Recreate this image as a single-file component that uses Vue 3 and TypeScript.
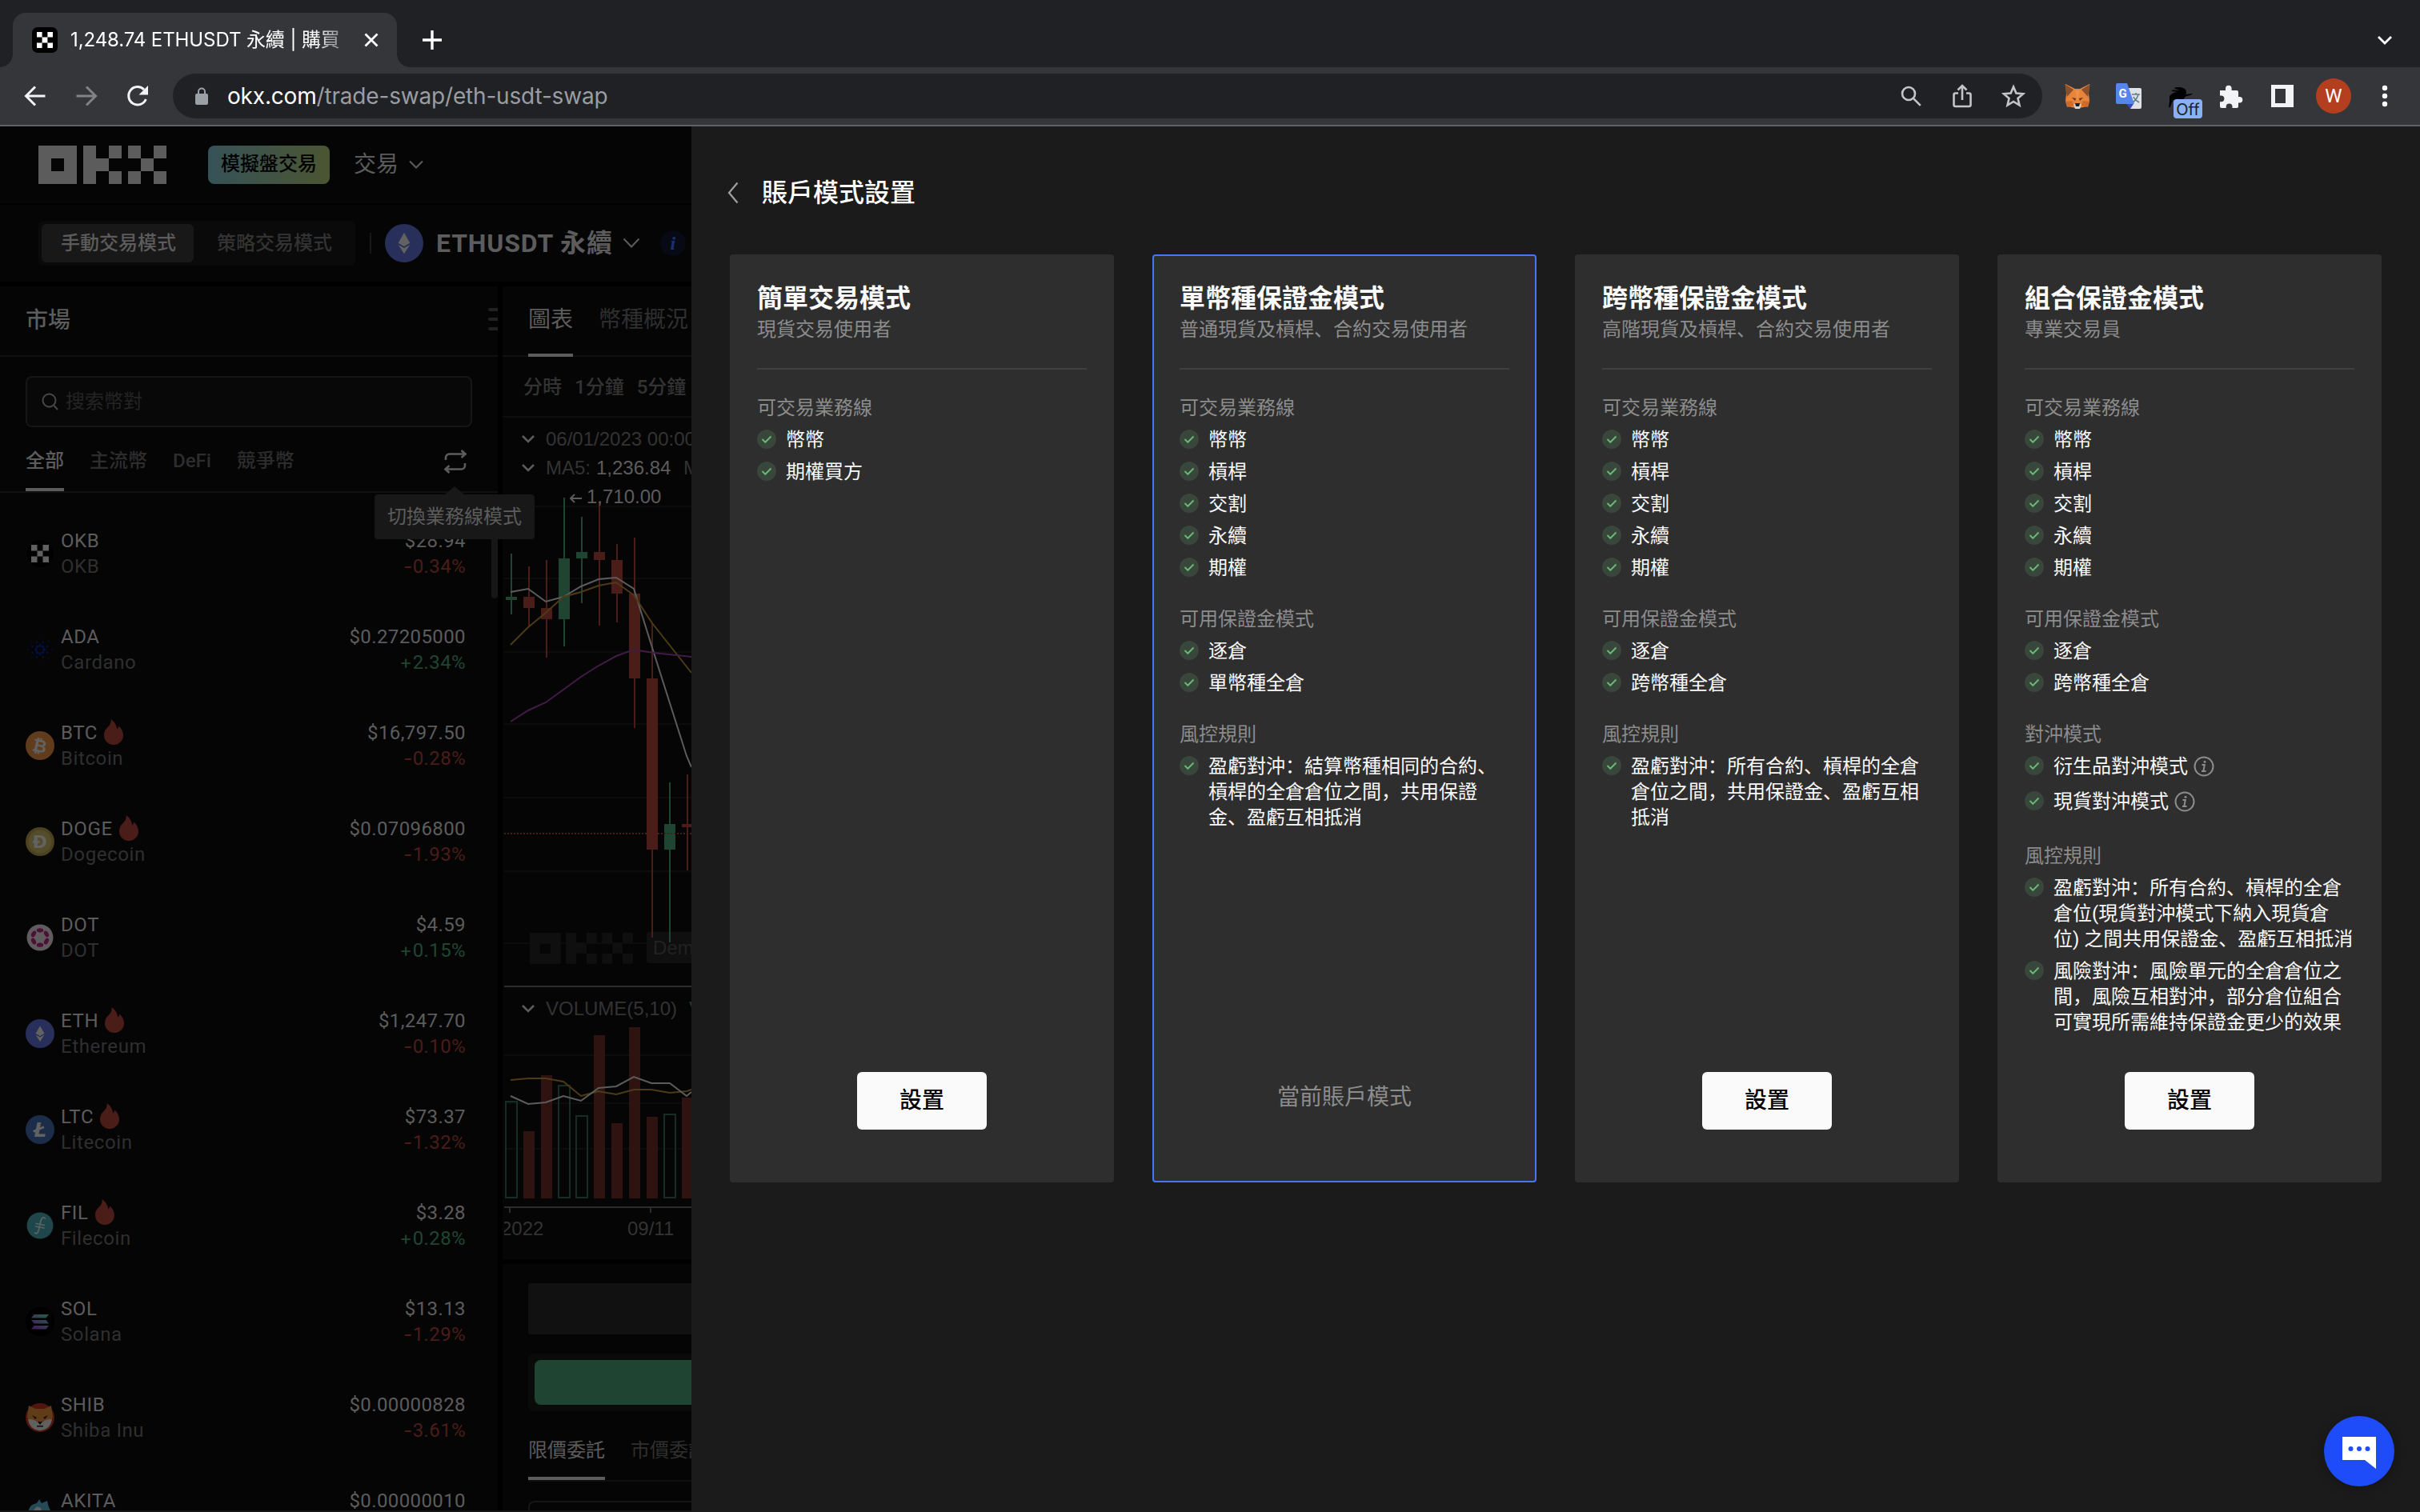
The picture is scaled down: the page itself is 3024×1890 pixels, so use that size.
<script setup lang="ts">
interface Coin {
  symbol: string
  name: string
  price: string
  change: string
  hot?: boolean
}

interface ModeItem {
  lines: string[]
  info?: boolean
}

interface ModeSection {
  label: string
  items: ModeItem[]
}

interface Mode {
  title: string
  subtitle: string
  current?: boolean
  sections: ModeSection[]
}

interface Candle {
  x: number
  up: boolean
  high: number
  low: number
  top: number
  bottom: number
  volumeTop: number
}

const coins: Coin[] = [
  { symbol: 'OKB', name: 'OKB', price: '$28.94', change: '-0.34%' },
  { symbol: 'ADA', name: 'Cardano', price: '$0.27205000', change: '+2.34%' },
  { symbol: 'BTC', name: 'Bitcoin', price: '$16,797.50', change: '-0.28%', hot: true },
  { symbol: 'DOGE', name: 'Dogecoin', price: '$0.07096800', change: '-1.93%', hot: true },
  { symbol: 'DOT', name: 'DOT', price: '$4.59', change: '+0.15%' },
  { symbol: 'ETH', name: 'Ethereum', price: '$1,247.70', change: '-0.10%', hot: true },
  { symbol: 'LTC', name: 'Litecoin', price: '$73.37', change: '-1.32%', hot: true },
  { symbol: 'FIL', name: 'Filecoin', price: '$3.28', change: '+0.28%', hot: true },
  { symbol: 'SOL', name: 'Solana', price: '$13.13', change: '-1.29%' },
  { symbol: 'SHIB', name: 'Shiba Inu', price: '$0.00000828', change: '-3.61%' },
  { symbol: 'AKITA', name: '', price: '$0.00000010', change: '' },
]

const one = (text: string, info = false): ModeItem => ({ lines: [text], info })
const business: ModeSection = {
  label: '可交易業務線',
  items: ['幣幣', '槓桿', '交割', '永續', '期權'].map((t) => one(t)),
}

const modes: Mode[] = [
  {
    title: '簡單交易模式',
    subtitle: '現貨交易使用者',
    sections: [{ label: '可交易業務線', items: [one('幣幣'), one('期權買方')] }],
  },
  {
    title: '單幣種保證金模式',
    subtitle: '普通現貨及槓桿、合約交易使用者',
    current: true,
    sections: [
      business,
      { label: '可用保證金模式', items: [one('逐倉'), one('單幣種全倉')] },
      {
        label: '風控規則',
        items: [{ lines: ['盈虧對沖：結算幣種相同的合約、', '槓桿的全倉倉位之間，共用保證', '金、盈虧互相抵消'] }],
      },
    ],
  },
  {
    title: '跨幣種保證金模式',
    subtitle: '高階現貨及槓桿、合約交易使用者',
    sections: [
      business,
      { label: '可用保證金模式', items: [one('逐倉'), one('跨幣種全倉')] },
      {
        label: '風控規則',
        items: [{ lines: ['盈虧對沖：所有合約、槓桿的全倉', '倉位之間，共用保證金、盈虧互相', '抵消'] }],
      },
    ],
  },
  {
    title: '組合保證金模式',
    subtitle: '專業交易員',
    sections: [
      business,
      { label: '可用保證金模式', items: [one('逐倉'), one('跨幣種全倉')] },
      { label: '對沖模式', items: [one('衍生品對沖模式', true), one('現貨對沖模式', true)] },
      {
        label: '風控規則',
        items: [
          { lines: ['盈虧對沖：所有合約、槓桿的全倉', '倉位(現貨對沖模式下納入現貨倉', '位) 之間共用保證金、盈虧互相抵消'] },
          { lines: ['風險對沖：風險單元的全倉倉位之', '間，風險互相對沖，部分倉位組合', '可實現所需維持保證金更少的效果'] },
        ],
      },
    ],
  },
]

const candles: Candle[] = [
  { x: 639, up: true, high: 692, low: 768, top: 746, bottom: 750, volumeTop: 1376 },
  { x: 661, up: false, high: 708, low: 783, top: 746, bottom: 760, volumeTop: 1414 },
  { x: 683, up: false, high: 700, low: 822, top: 760, bottom: 774, volumeTop: 1344 },
  { x: 705, up: true, high: 622, low: 808, top: 698, bottom: 774, volumeTop: 1356 },
  { x: 727, up: true, high: 646, low: 754, top: 690, bottom: 698, volumeTop: 1394 },
  { x: 749, up: false, high: 627, low: 782, top: 690, bottom: 700, volumeTop: 1294 },
  { x: 771, up: false, high: 680, low: 778, top: 700, bottom: 742, volumeTop: 1404 },
  { x: 793, up: false, high: 672, low: 910, top: 742, bottom: 848, volumeTop: 1284 },
  { x: 815, up: false, high: 778, low: 1172, top: 848, bottom: 1062, volumeTop: 1396 },
  { x: 837, up: true, high: 978, low: 1178, top: 1030, bottom: 1062, volumeTop: 1392 },
  { x: 859, up: false, high: 968, low: 1088, top: 1030, bottom: 1034, volumeTop: 1372 },
]

const gridLines = [633, 723, 815, 905, 997, 1089, 1179, 1319, 1379, 1436]

const adaDots = Array.from({ length: 24 }, (_, i) => {
  const ring = Math.floor(i / 8)
  const angle = (i % 8) * (Math.PI / 4) + ring * 0.39
  const r = 5 + ring * 5
  return { x: 18 + Math.cos(angle) * r, y: 18 + Math.sin(angle) * r, r: 1.9 - ring * 0.55 }
})
</script>

<template>
  <div class="window">
    <header class="browser">
      <div class="tabstrip">
        <div class="tab">
          <svg class="favicon" viewBox="0 0 32 32"><rect width="32" height="32" rx="7" /><path fill="#fff" d="M6 6h6.6v6.6H6zM19.400 6H26v6.600h-6.600zM12.600 12.600h6.800v6.800h-6.800zM6 19.400h6.600V26H6zM19.400 19.400H26V26h-6.600z" /></svg>
          <span class="tab-title">1,248.74 ETHUSDT 永續 | 購買</span>
          <svg class="tab-close" viewBox="0 0 20 20"><path d="M2.500 2.500l15 15M17.500 2.500l-15 15" /></svg>
        </div>
        <svg class="tab-plus" viewBox="0 0 26 26"><path d="M13 1v24M1 13h24" /></svg>
        <svg class="tab-more" viewBox="0 0 20 14"><path d="M2 2l8 8 8-8" /></svg>
      </div>
      <div class="toolbar">
        <svg class="nav-icon" viewBox="0 0 28 28"><path d="M26.500 14H2.500M14 2.500L2.500 14 14 25.500" /></svg>
        <svg class="nav-icon off" viewBox="0 0 28 28"><path d="M1.500 14h24M14 2.500L25.500 14 14 25.500" /></svg>
        <svg class="nav-icon" viewBox="0 0 28 28"><path d="M24.300 18A11.200 11.200 0 1 1 22 6" /><path d="M27 1v11.500H15.500z" fill="#f1f3f4" stroke="none" /></svg>
        <div class="omnibox">
          <svg class="lock" viewBox="0 0 18 22"><rect x="1" y="8" width="16" height="14" rx="2" fill="#9aa0a6" /><path d="M5 9V5.500a4 4 0 0 1 8 0V9" fill="none" stroke="#9aa0a6" stroke-width="2" /></svg>
          <span class="url"><b>okx.com</b>/trade-swap/eth-usdt-swap</span>
          <svg class="box-icon" viewBox="0 0 32 32"><circle cx="13" cy="13" r="8" /><path d="M18.800 18.800l9 9" /></svg>
          <svg class="box-icon" viewBox="0 0 32 32"><path d="M11 12.500H7.500a2 2 0 0 0-2 2V27a2 2 0 0 0 2 2h17a2 2 0 0 0 2-2V14.500a2 2 0 0 0-2-2H21M16 21V3.500M10.500 8.500L16 3l5.500 5.500" /></svg>
          <svg class="box-icon" viewBox="0 0 32 32"><path d="M16 4.500l3.400 8 8.700.8-6.600 5.700 2 8.500L16 23l-7.500 4.500 2-8.500-6.600-5.700 8.700-.8z" /></svg>
        </div>
        <div class="extensions">
          <svg class="ext" viewBox="0 0 32 32">
            <path fill="#e8833a" d="M1 1l12 6h6l12-6-1 12 1 9-2 7-6 1-5 1h-4l-5-1-6-1-2-7 1-9z" />
            <path fill="#8a4f2c" d="M0 1l11 7-8 9zM32 1l-11 7 8 9z" />
            <path fill="#f3a25a" d="M13 9h6l-3 14z" opacity=".45" />
            <path fill="#cf6a2a" d="M1 23l8-1 3 6-9 2zM31 23l-8-1-3 6 9 2z" />
            <path fill="#5c3420" d="M9 18l5 1-1 3zM23 18l-5 1 1 3z" />
            <path fill="#ddd3c9" d="M11 26h10l-2 6h-6z" /><path fill="#17202a" d="M13 25h6l-1 4h-4z" />
          </svg>
          <svg class="ext" viewBox="0 0 32 32">
            <path fill="#dfe1e4" d="M13 6h17a2 2 0 0 1 2 2v22a2 2 0 0 1-2 2H18z" />
            <path fill="#3649b8" d="M13 26h9l-4 6z" /><path fill="#5685ec" d="M2 0h12l9 26H2a2 2 0 0 1-2-2V2a2 2 0 0 1 2-2z" />
            <text x="3.500" y="18" fill="#fff" font-size="15" font-weight="700" font-family="Roboto">G</text>
            <path d="M20 14h10M25 12v2M28 14c-1 4-4 8-7 10M22 17c1 3 4 5 7 7" fill="none" stroke="#5f7f8c" stroke-width="1.600" />
          </svg>
          <div class="rabbit">
            <svg viewBox="0 0 32 32"><path d="M3 16c4-4 7-5 11-5l-8-1c-1-1.500 2-1.800 5-1.200l5-.3c-4-1-7-1.500-7-2.500 4-1.500 12-1.500 14.500 3 1 2 .5 4-.5 5l9-1c-2 2.500-6 2.500-9 3.500l-3 4-7-1-6 2-3 8-2 1 1-8z" /></svg>
            <span class="badge">Off</span>
          </div>
          <svg class="ext" viewBox="0 0 32 32"><path fill="#f1f3f4" d="M2 9h7V6.500a3.800 3.800 0 0 1 7.600 0V9H23a2 2 0 0 1 2 2v6h1.500a3.800 3.800 0 0 1 0 7.600H25V29a2 2 0 0 1-2 2h-5.500v-1.700a3.900 3.900 0 0 0-7.800 0V31H4a2 2 0 0 1-2-2v-5.800h1.500a3.900 3.900 0 0 0 0-7.800H2z" /></svg>
          <svg class="ext" viewBox="0 0 32 32"><path fill="#f1f3f4" fill-rule="evenodd" d="M2 2h28v28H2zM7 7v18h13V7z" /></svg>
          <span class="avatar">W</span>
          <svg class="kebab" viewBox="0 0 8 28"><circle cx="4" cy="4" r="3.200" /><circle cx="4" cy="14" r="3.200" /><circle cx="4" cy="24" r="3.200" /></svg>
        </div>
      </div>
    </header>

    <div class="page">
      <div class="trade">
        <div class="site-header">
          <svg class="logo" viewBox="0 0 160 48"><path fill-rule="evenodd" d="M0 0h48v48H0zM16 16v16h16V16zM56 0h16v16h16v16H72v16H56zM88 0h16v16H88zM88 32h16v16H88zM112 0h16v16h-16zM144 0h16v16h-16zM128 16h16v16h-16zM112 32h16v16h-16zM144 32h16v16h-16z" /></svg>
          <span class="demo">模擬盤交易</span>
          <span class="menu">交易</span>
          <svg class="menu-caret" viewBox="0 0 18 12"><path d="M1 1.500l8 8 8-8" /></svg>
        </div>
        <div class="pair-bar">
          <div class="switch"><span class="on">手動交易模式</span><span>策略交易模式</span></div>
          <i class="bar-divider"></i>
          <svg class="eth" viewBox="0 0 36 36"><circle cx="18" cy="18" r="18" fill="#272f5a" /><path fill="#626262" d="M18 8l5.500 9.800L18 21l-5.500-3.200zM18 28l-5.500-8.500L18 22.500l5.500-3z" /></svg>
          <span class="pair">ETHUSDT 永續</span>
          <svg class="pair-caret" viewBox="0 0 22 14"><path d="M1.500 1.500L11 11.500l9.500-10" /></svg>
          <span class="info-dot">i</span>
        </div>

        <div class="columns">
          <aside class="market">
            <div class="market-head"><span>市場</span><div class="grip"><i></i><i></i><i></i></div></div>
            <div class="search">
              <svg viewBox="0 0 22 22"><circle cx="9.500" cy="9.500" r="8" /><path d="M15.500 16l4.500 5" /></svg>
              <span>搜索幣對</span>
            </div>
            <div class="filters">
              <span class="on">全部</span><span>主流幣</span><span>DeFi</span><span>競爭幣</span>
              <svg viewBox="0 0 28 30"><path d="M2 13V10a4.500 4.500 0 0 1 4.500-4.500H26M21.500 1l5 4.500-5 4.500M26 17v3a4.500 4.500 0 0 1-4.500 4.500H2M6.500 20l-5 4.500 5 4.500" /></svg>
              <div class="tooltip">切換業務線模式</div>
            </div>
            <div class="coins">
              <i class="scroll"></i>
              <div v-for="c in coins" :key="c.symbol" class="coin">
                <svg class="coin-icon" viewBox="0 0 36 36">
                  <template v-if="c.symbol === 'OKB'">
                    <circle cx="18" cy="18" r="17" fill="#000" /><path fill="#606060" d="M7 7h7.500v7.500H7zM21.500 7H29v7.500h-7.500zM14.500 14.500h7v7h-7zM7 21.500h7.500V29H7zM21.500 21.500H29V29h-7.500z" />
                  </template>
                  <template v-else-if="c.symbol === 'ADA'">
                    <circle v-for="(d, i) in adaDots" :key="i" :cx="d.x" :cy="d.y" :r="d.r" fill="#060f3c" />
                  </template>
                  <template v-else-if="c.symbol === 'BTC'">
                    <circle cx="18" cy="18" r="18" fill="#603c1c" /><text class="sign" x="18" y="26" font-size="22" transform="rotate(12 18 18)">₿</text>
                  </template>
                  <template v-else-if="c.symbol === 'DOGE'">
                    <circle cx="18" cy="18" r="18" fill="#4a4220" /><circle cx="18" cy="18" r="14.500" fill="#554c2a" /><text class="sign" x="18" y="26" font-size="22">Ð</text>
                  </template>
                  <template v-else-if="c.symbol === 'DOT'">
                    <circle cx="18" cy="18" r="16.500" fill="#5f5b5f" />
                    <ellipse v-for="n in 6" :key="n" cx="18" cy="8.800" rx="4.200" ry="2.600" fill="#4b1033" :transform="`rotate(${n * 60} 18 18)`" />
                  </template>
                  <template v-else-if="c.symbol === 'ETH'">
                    <circle cx="18" cy="18" r="18" fill="#272f5a" /><path fill="#626262" d="M18 8.500l5.500 9.300L18 21l-5.500-3.200zM18 28l-5.500-8.500L18 22.500l5.500-3z" />
                  </template>
                  <template v-else-if="c.symbol === 'LTC'">
                    <circle cx="18" cy="18" r="18" fill="#1c2d4a" /><text class="sign" x="18" y="27" font-size="25" font-style="italic">Ł</text>
                  </template>
                  <template v-else-if="c.symbol === 'FIL'">
                    <circle cx="18" cy="18" r="16.500" fill="#1f474b" />
                    <path d="M24.500 9c-3-3-5 0-6 5l-2 9c-.8 4-2.500 6-5 4M13 15.500l10.500 2M12.500 19l10.500 2" fill="none" stroke="#5a6464" stroke-width="1.700" stroke-linecap="round" />
                  </template>
                  <template v-else-if="c.symbol === 'SOL'">
                    <defs><linearGradient id="sol" gradientUnits="userSpaceOnUse" x1="10" y1="28" x2="24" y2="8"><stop offset="0" stop-color="#461a5c" /><stop offset="1" stop-color="#245a48" /></linearGradient></defs>
                    <circle cx="18" cy="18" r="18" fill="#000" /><path fill="url(#sol)" d="M10.500 9H29l-3.500 4.500H7zM7 16h18.500l3.500 4.500H10.500zM10.500 23H29l-3.500 4.500H7z" />
                  </template>
                  <template v-else-if="c.symbol === 'SHIB'">
                    <circle cx="18" cy="18" r="18" fill="#521610" /><path fill="#603c18" d="M4 3l8 4h12l8-4 2 14-5 13-11 5-11-5L2 17z" />
                    <path fill="#606060" d="M3 20c6 0 9 1 12 4h6c3-3 6-4 12-4-1 8-7 14-15 14S4 28 3 20z" />
                    <path fill="#100c08" d="M8 15l6 3-2 2zM28 15l-6 3 2 2zM15 23h6l-3 4zM14 28h8v1.500h-8z" />
                  </template>
                  <template v-else>
                    <path fill="#254a56" d="M3 18C4 9 8 6 14 5l3-5 3 5 7-3 2 8 4 8-3 12H8z" /><path fill="#5a6266" d="M8 16l6-7 5 2 2 9-8 6z" />
                  </template>
                </svg>
                <div class="coin-text">
                  <div class="symbol">{{ c.symbol }}<svg v-if="c.hot" viewBox="0 0 24 32"><path d="M8.500 0c4.500 3 7.500 8 7.700 12.500 1.200-1 1.800-2.300 2-4C22 11.500 24 16 24 20a12 12 0 0 1-24 .2C0 14.500 2.500 12 5 9.500 7.500 7 9 4.500 8.500 0z" /></svg></div>
                  <div class="name">{{ c.name }}</div>
                </div>
                <div class="coin-price">
                  <div>{{ c.price }}</div>
                  <div class="change" :class="c.change.startsWith('+') ? 'up' : 'down'"><i>{{ c.change.slice(0, 1) }}</i>{{ c.change.slice(1) }}</div>
                </div>
              </div>
            </div>
          </aside>

          <div class="center">
            <section class="chart">
              <div class="chart-tabs"><span class="on">圖表</span><span>幣種概況</span></div>
              <div class="intervals"><span>分時</span><span>1分鐘</span><span>5分鐘</span></div>
              <svg class="plot" viewBox="628 522 236 1052">
                <path v-for="y in gridLines" :key="y" :d="`M630 ${y}H864`" stroke="#0c0c0c" stroke-width="2" />
                <g fill="#0f0f0f">
                  <path fill-rule="evenodd" transform="translate(662 1166) scale(.806)" d="M0 0h48v48H0zM16 16v16h16V16zM56 0h16v16h16v16H72v16H56zM88 0h16v16H88zM88 32h16v16H88zM112 0h16v16h-16zM144 0h16v16h-16zM128 16h16v16h-16zM112 32h16v16h-16zM144 32h16v16h-16z" />
                  <rect x="808" y="1165" width="80" height="39" rx="3" />
                </g>
                <text x="816" y="1193" fill="#222">Demo</text>
                <g v-for="c in candles" :key="c.x" :fill="c.up ? '#1f4532' : '#4a1d19'">
                  <rect :x="c.x - 1" :y="c.high" width="2" :height="c.low - c.high" />
                  <rect :x="c.x - 7" :y="c.top" width="14" :height="c.bottom - c.top" />
                  <rect v-if="c.up" :x="c.x - 7" :y="c.volumeTop + 1" width="14" :height="1497 - c.volumeTop - 1" fill="none" stroke="#172c23" stroke-width="2" />
                  <rect v-else :x="c.x - 7" :y="c.volumeTop" width="14" :height="1498 - c.volumeTop" fill="#2f1310" />
                </g>
                <g fill="none" stroke-width="2">
                  <path stroke="#4a1d19" stroke-dasharray="2 2" d="M630 1042H864" />
                  <path stroke="#5c5c5c" d="M638 740L660 736 682 752 704 746 726 733 748 724 770 722 792 736 817 816 858 945 864 959" />
                  <path stroke="#4d3a16" d="M638 806L660 784 682 766 704 746 726 740 748 732 770 728 792 744 815 779 864 841" />
                  <path stroke="#421b47" d="M638 902L660 888 682 878 704 862 726 846 748 832 770 820 792 812 817 816 864 821" />
                  <path stroke="#4d3a16" d="M638 1350L660 1348 682 1348 704 1352 726 1370 748 1364 770 1368 792 1362 814 1362 837 1366 858 1364 864 1362" />
                  <path stroke="#5c5c5c" d="M638 1370L660 1380 682 1378 704 1370 726 1376 748 1360 770 1358 792 1346 814 1354 837 1354 858 1370 864 1365" />
                  <path stroke="#2c2c2c" d="M630 1233H864M630 1509H864M637 1510v6M813 1510v6" />
                  <path stroke="#5c5c5c" stroke-width="2.500" d="M653 545l7 7 7-7M653 581l7 7 7-7M653 1257l7 7 7-7" />
                  <path stroke="#5c5c5c" d="M727 623H713M718 618l-5 5 5 5" />
                </g>
                <g fill="#333">
                  <text x="682" y="557">06/01/2023 00:00</text>
                  <text x="682" y="593">MA5:</text>
                  <text x="854" y="593">M</text>
                  <text x="682" y="1269">VOLUME(5,10)</text>
                  <text x="861" y="1269">V</text>
                  <text x="626" y="1544">2022</text>
                  <text x="784" y="1544">09/11</text>
                </g>
                <g fill="#5c5c5c"><text x="745" y="593">1,236.84</text><text x="733" y="629">1,710.00</text></g>
                <rect x="628" y="1520" width="2" height="40" fill="#050505" />
              </svg>
            </section>
            <section class="order">
              <div class="account"></div>
              <div class="side"><div></div></div>
              <div class="order-tabs"><span class="on">限價委託</span><span>市價委託</span></div>
              <div class="input"></div>
            </section>
          </div>
        </div>
      </div>

      <main class="drawer">
        <div class="drawer-head">
          <svg viewBox="0 0 14 28"><path d="M12.500 1.500L2 14l10.500 12.500" /></svg>
          <h1>賬戶模式設置</h1>
        </div>
        <div class="cards">
          <article v-for="m in modes" :key="m.title" class="card" :class="{ current: m.current }">
            <h2>{{ m.title }}</h2>
            <p class="subtitle">{{ m.subtitle }}</p>
            <hr />
            <section v-for="s in m.sections" :key="s.label" class="section">
              <div class="label">{{ s.label }}</div>
              <div v-for="it in s.items" :key="it.lines[0]" class="item" :class="{ tall: it.info }">
                <svg class="check" viewBox="0 0 24 24"><circle cx="12" cy="12" r="12" fill="#39463c" /><path d="M6.500 12l3.800 3.800 7.200-7.300" fill="none" stroke="#66b874" stroke-width="2" /></svg>
                <div class="lines"><div v-for="l in it.lines" :key="l">{{ l }}</div></div>
                <svg v-if="it.info" class="info" viewBox="0 0 26 26"><circle cx="13" cy="13" r="11.500" fill="none" stroke="#8c8c8c" stroke-width="2" /><path d="M10.500 11h3.300l-1.500 8M10 19h5.500" fill="none" stroke="#8c8c8c" stroke-width="2" /><circle cx="14" cy="7.300" r="1.500" fill="#8c8c8c" /></svg>
              </div>
            </section>
            <div class="action">
              <span v-if="m.current" class="now">當前賬戶模式</span>
              <button v-else>設置</button>
            </div>
          </article>
        </div>
        <div class="chat">
          <svg viewBox="0 0 44 42"><path fill="#fff" d="M1 1h42v40L29 30H1z" /><circle cx="11.500" cy="16" r="3" /><circle cx="22" cy="16" r="3" /><circle cx="32.500" cy="16" r="3" /></svg>
        </div>
      </main>
    </div>
  </div>
</template>

<style>
body {
  background: #1b1b1b;
}
</style>

<style scoped>
* {
  box-sizing: border-box;
}
.window {
  width: 3024px;
  height: 1890px;
  overflow: hidden;
  display: flex;
  flex-direction: column;
  font-family: Roboto, 'Noto Sans CJK SC', sans-serif;
  font-size: 24px;
  line-height: 32px;
  color: #5c5c5c;
}
svg {
  display: block;
  flex: none;
}

/* browser frame */
.browser {
  height: 158px;
  flex: none;
  font-family: Inter, 'Noto Sans CJK SC', sans-serif;
}
.tabstrip {
  height: 84px;
  background: #202124;
  display: flex;
  align-items: center;
  padding: 16px 34px 0 16px;
}
.tab {
  position: relative;
  width: 480px;
  height: 68px;
  background: #35363a;
  border-radius: 16px 16px 0 0;
  display: flex;
  align-items: center;
  padding: 0 22px 0 24px;
}
.tab::before,
.tab::after {
  content: '';
  position: absolute;
  bottom: 0;
  width: 16px;
  height: 16px;
}
.tab::before {
  left: -16px;
  background: radial-gradient(circle at 0 0, transparent 15.500px, #35363a 16px);
}
.tab::after {
  right: -16px;
  background: radial-gradient(circle at 100% 0, transparent 15.500px, #35363a 16px);
}
.favicon {
  width: 32px;
  height: 32px;
}
.tab-title {
  margin-left: 16px;
  width: 352px;
  flex: none;
  white-space: nowrap;
  overflow: hidden;
  color: #fff;
  font-size: 24px;
  letter-spacing: -0.100px;
  mask-image: linear-gradient(90deg, #000 305px, transparent 360px);
}
.tab-close {
  width: 20px;
  height: 20px;
  margin-left: auto;
}
.tab-close path,
.tab-plus path,
.tab-more path {
  stroke: #fff;
  stroke-width: 2.800;
  fill: none;
}
.tab-plus {
  width: 26px;
  height: 26px;
  margin-left: 31px;
}
.tab-plus path {
  stroke-width: 3.400;
}
.tab-more {
  width: 20px;
  height: 14px;
  margin-left: auto;
  margin-top: 2px;
}
.toolbar {
  height: 74px;
  background: #35363a;
  border-bottom: 2px solid #616265;
  display: flex;
  align-items: center;
  padding-left: 30px;
}
.nav-icon {
  width: 28px;
  height: 28px;
  margin-right: 36px;
  fill: none;
  stroke: #f1f3f4;
  stroke-width: 3;
}
.nav-icon.off {
  stroke: #828387;
}
.omnibox {
  width: 2336px;
  height: 56px;
  flex: none;
  margin-left: -6px;
  border-radius: 28px;
  background: #202124;
  display: flex;
  align-items: center;
  padding: 0 20px 0 27px;
}
.lock {
  width: 18px;
  height: 22px;
}
.url {
  margin-left: 23px;
  flex: 1;
  font-size: 28px;
  letter-spacing: -0.180px;
  color: #9a9da1;
}
.url b {
  font-weight: 400;
  color: #fff;
}
.box-icon {
  width: 32px;
  height: 32px;
  margin-left: 32px;
  fill: none;
  stroke: #c4c5c7;
  stroke-width: 2.600;
}
.extensions {
  display: flex;
  align-items: center;
  gap: 32px;
  margin-left: 28px;
}
.ext {
  width: 32px;
  height: 32px;
}
.rabbit {
  position: relative;
  width: 32px;
  height: 32px;
}
.rabbit svg {
  width: 32px;
  height: 32px;
}
.badge {
  position: absolute;
  left: 8px;
  top: 20px;
  width: 36px;
  height: 24px;
  border-radius: 4px;
  background: #8ab0f6;
  color: #202124;
  font-size: 20px;
  line-height: 27px;
  text-align: center;
}
.avatar {
  width: 44px;
  height: 44px;
  border-radius: 50%;
  background: #b33f1f;
  color: #fff;
  font: 24px/44px Roboto, sans-serif;
  text-align: center;
  margin-left: -6px;
}
.kebab {
  width: 8px;
  height: 28px;
  margin-left: 6px;
  fill: #fff;
}

/* dimmed trading page */
.page {
  flex: 1;
  min-height: 0;
  display: flex;
}
.trade {
  width: 864px;
  flex: none;
  background: #000;
  overflow: hidden;
  border-bottom: 2px solid #161616;
  display: flex;
  flex-direction: column;
}
.site-header {
  height: 96px;
  flex: none;
  background: #050505;
  display: flex;
  align-items: center;
  padding-left: 48px;
}
.logo {
  width: 160px;
  height: 48px;
  fill: #5c5c5c;
}
.demo {
  margin-left: 52px;
  width: 152px;
  height: 48px;
  border-radius: 8px;
  background: linear-gradient(90deg, #365258, #4b5531);
  color: #000;
  font-weight: 500;
  line-height: 47px;
  text-align: center;
}
.menu {
  margin-left: 30px;
  font-size: 28px;
}
.menu-caret {
  width: 18px;
  height: 12px;
  margin-left: 13px;
}
.menu-caret path,
.pair-caret path {
  fill: none;
  stroke: #5c5c5c;
  stroke-width: 2;
}
.pair-bar {
  height: 96px;
  flex: none;
  margin-top: 2px;
  background: #050505;
  display: flex;
  align-items: center;
  padding-left: 48px;
}
.switch {
  width: 396px;
  height: 56px;
  padding: 4px;
  border-radius: 6px;
  background: #0a0a0a;
  display: flex;
  color: #333;
}
.switch span {
  width: 192px;
  border-radius: 6px;
  padding-left: 2px;
  line-height: 48px;
  text-align: center;
  font-weight: 500;
}
.switch span + span {
  width: 200px;
  padding-left: 4px;
}
.switch .on {
  background: #181818;
  color: #5c5c5c;
}
.bar-divider {
  width: 2px;
  height: 26px;
  margin: 0 17px 0 18px;
  background: #181818;
}
.eth {
  width: 48px;
  height: 48px;
}
.pair {
  margin-left: 16px;
  font-size: 32px;
  font-weight: 700;
  letter-spacing: 0.850px;
  white-space: nowrap;
}
.pair-caret {
  width: 22px;
  height: 14px;
  margin-left: 12px;
}
.info-dot {
  flex: none;
  width: 32px;
  height: 32px;
  margin-left: 25px;
  border-radius: 50%;
  background: #070a14;
  color: #1d3170;
  font: italic bold 24px/32px 'Liberation Serif', serif;
  text-align: center;
}
.columns {
  flex: 1;
  min-height: 0;
  margin-top: 6px;
  display: flex;
  gap: 6px;
}
.market {
  width: 622px;
  flex: none;
  background: #050505;
  display: flex;
  flex-direction: column;
}
.market-head {
  height: 88px;
  flex: none;
  border-bottom: 2px solid #101010;
  display: flex;
  align-items: center;
  justify-content: space-between;
  padding: 0 0 4px 32px;
  font-size: 28px;
  font-weight: 500;
}
.market-head span {
  margin-top: 3px;
}
.grip {
  display: flex;
  flex-direction: column;
  gap: 8px;
}
.grip i {
  width: 12px;
  height: 4px;
  border-radius: 2px 0 0 2px;
  background: #222;
}
.search {
  height: 64px;
  flex: none;
  margin: 24px 32px 0;
  border: 2px solid #161616;
  border-radius: 8px;
  background: #080808;
  display: flex;
  align-items: center;
  padding-left: 18px;
  gap: 8px;
  color: #242424;
}
.search svg {
  width: 22px;
  height: 22px;
  fill: none;
  stroke: #484848;
  stroke-width: 2;
}
.filters {
  position: relative;
  height: 82px;
  flex: none;
  border-bottom: 2px solid #101010;
  display: flex;
  gap: 32px;
  padding: 0 39px 0 32px;
  color: #2d2d2d;
  font-weight: 500;
}
.filters span {
  line-height: 84px;
  height: 80px;
}
.filters .on {
  color: #5c5c5c;
  border-bottom: 4px solid #5c5c5c;
}
.filters svg {
  width: 28px;
  height: 30px;
  margin: 28px 0 0 auto;
  fill: none;
  stroke: #5c5c5c;
  stroke-width: 2.600;
}
.tooltip {
  position: absolute;
  z-index: 2;
  left: 468px;
  top: 84px;
  width: 200px;
  height: 56px;
  border-radius: 4px;
  background: #181818;
  color: #5c5c5c;
  font-weight: 400;
  line-height: 56px;
  text-align: center;
}
.tooltip::before {
  content: '';
  position: absolute;
  left: 88px;
  top: -10px;
  border: 12px solid transparent;
  border-top: 0;
  border-bottom: 10px solid #181818;
}
.coins {
  position: relative;
  flex: 1;
  min-height: 0;
  overflow: hidden;
  padding-top: 16px;
}
.scroll {
  position: absolute;
  right: 0;
  top: 8px;
  width: 8px;
  height: 124px;
  border-radius: 4px;
  background: #161616;
}
.coin {
  height: 120px;
  display: flex;
  align-items: center;
  padding: 0 40px 0 32px;
  letter-spacing: 0.400px;
}
.coin-icon {
  width: 36px;
  height: 36px;
}
.sign {
  font-family: 'DejaVu Sans', sans-serif;
  font-weight: 700;
  text-anchor: middle;
  fill: #626262;
}
.coin-text {
  margin-left: 8px;
  flex: 1;
  letter-spacing: 0.600px;
}
.symbol {
  display: flex;
  height: 32px;
}
.symbol svg {
  width: 24px;
  height: 32px;
  margin: -1px 0 0 8px;
  fill: #4a1d19;
}
.name {
  height: 32px;
  color: #2f2f2f;
}
.coin-price {
  text-align: right;
}
.change {
  height: 32px;
}
.change i {
  font-family: Inter, sans-serif;
  font-style: normal;
}
.up {
  color: #1f4532;
}
.down {
  color: #4a1d19;
}
.center {
  width: 236px;
  flex: none;
  display: flex;
  flex-direction: column;
  gap: 6px;
  white-space: nowrap;
}
.chart {
  height: 1216px;
  flex: none;
  overflow: hidden;
  background: #050505;
}
.chart-tabs {
  height: 88px;
  padding-left: 32px;
  border-bottom: 2px solid #101010;
  display: flex;
  gap: 32px;
  font-size: 28px;
  color: #2f2f2f;
}
.chart-tabs span {
  height: 88px;
  line-height: 84px;
}
.chart-tabs .on {
  color: #5c5c5c;
  border-bottom: 4px solid #5c5c5c;
}
.intervals {
  height: 76px;
  border-bottom: 2px solid #0e0e0e;
  display: flex;
  gap: 16px;
  padding-left: 26px;
  line-height: 76px;
  color: #333;
  font-weight: 500;
}
.plot {
  width: 236px;
  height: 1052px;
  font: 24px 'Liberation Sans', sans-serif;
}
.order {
  flex: 1;
  min-height: 0;
  overflow: hidden;
  background: #050505;
  padding: 24px 0 0 32px;
}
.account {
  height: 64px;
  border-radius: 4px 0 0 4px;
  background: #111;
}
.side {
  height: 72px;
  margin-top: 24px;
  padding: 8px 0 8px 8px;
  border-radius: 8px 0 0 8px;
  background: #0a0a0a;
}
.side div {
  height: 56px;
  border-radius: 8px 0 0 8px;
  background: #1f4532;
}
.order-tabs {
  height: 88px;
  border-bottom: 2px solid #101010;
  display: flex;
  gap: 32px;
  color: #2f2f2f;
}
.order-tabs span {
  height: 86px;
  flex: none;
  line-height: 98px;
}
.order-tabs .on {
  color: #5c5c5c;
  border-bottom: 4px solid #5c5c5c;
}
.input {
  height: 64px;
  margin-top: 24px;
  border: 2px solid #161616;
  border-right: 0;
  border-radius: 8px 0 0 8px;
}

/* account mode drawer */
.drawer {
  position: relative;
  flex: 1;
  background: #1b1b1b;
  padding: 0 48px;
}
.drawer-head {
  height: 160px;
  display: flex;
  align-items: center;
  gap: 29px;
  padding-top: 5px;
  margin-left: -3px;
}
.drawer-head svg {
  width: 14px;
  height: 28px;
  fill: none;
  stroke: #a0a0a0;
  stroke-width: 2.200;
}
.drawer-head h1 {
  margin: 0;
  font-size: 32px;
  line-height: 48px;
  font-weight: 500;
  color: #fff;
}
.cards {
  display: flex;
  gap: 48px;
}
.card {
  width: 480px;
  height: 1160px;
  border: 2px solid #2e2e2e;
  border-radius: 4px;
  background: #2e2e2e;
  padding: 30px 32px 64px;
  display: flex;
  flex-direction: column;
  color: #fafafa;
}
.card.current {
  border-color: #4377f5;
}
.card h2 {
  margin: 0;
  font-size: 32px;
  line-height: 46px;
  font-weight: 700;
}
.subtitle {
  margin: 0;
  color: #8c8c8c;
}
.card hr {
  width: 100%;
  height: 2px;
  margin: 32px 0 0;
  border: 0;
  background: #414141;
}
.section {
  margin-top: 32px;
}
.label {
  color: #8c8c8c;
}
.item {
  margin-top: 8px;
  display: flex;
}
.item.tall {
  height: 36px;
}
.check {
  width: 24px;
  height: 24px;
  margin: 3px 12px 0 0;
}
.lines {
  white-space: nowrap;
}
.info {
  width: 26px;
  height: 26px;
  margin: 3px 0 0 7px;
}
.action {
  height: 72px;
  margin-top: auto;
  text-align: center;
}
.now {
  font-size: 28px;
  line-height: 64px;
  color: #8c8c8c;
}
button {
  width: 162px;
  height: 72px;
  padding: 0;
  border: 0;
  border-radius: 6px;
  background: #fafafa;
  color: #000;
  font: 500 28px/70px Roboto, 'Noto Sans CJK SC', sans-serif;
}
.chat {
  position: absolute;
  right: 32px;
  bottom: 32px;
  width: 88px;
  height: 88px;
  border-radius: 50%;
  background: #1e4cf8;
  box-shadow: 0 2px 16px rgba(0, 0, 0, 0.25);
  display: flex;
  align-items: center;
  justify-content: center;
}
.chat svg {
  width: 44px;
  height: 42px;
  margin-top: 4px;
  fill: #1e4cf8;
}
</style>
